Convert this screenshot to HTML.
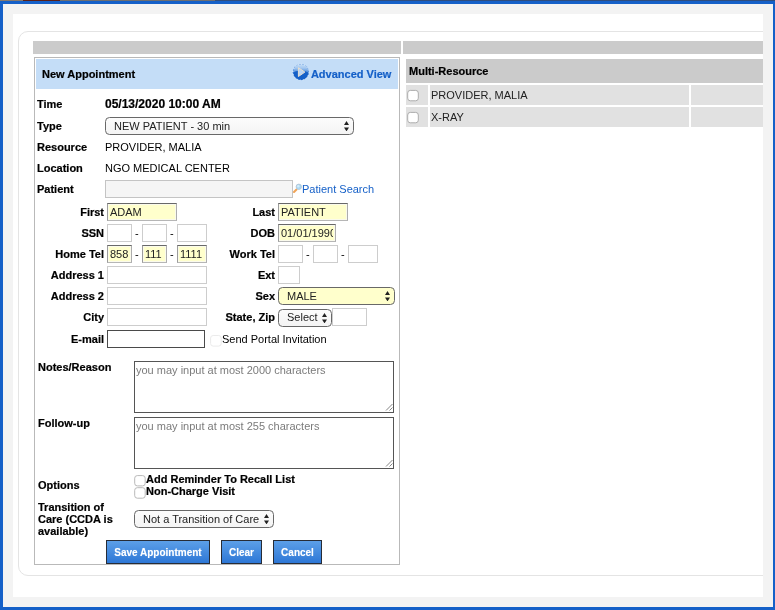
<!DOCTYPE html>
<html><head><meta charset="utf-8"><title>New Appointment</title>
<style>
html,body{margin:0;padding:0}
body{width:775px;height:610px;overflow:hidden;position:relative;background:#f3f3f3;font-family:"Liberation Sans",Arial,sans-serif;font-size:11px;color:#000}
.a{position:absolute;white-space:nowrap;line-height:13px}
.b{font-weight:bold;-webkit-text-stroke:0.2px #000}
.r{text-align:right}
.in{position:absolute;box-sizing:border-box;background:#fff;border:1px solid #cdcdcd;height:18px;font-size:11px;line-height:16px;padding:0 0 0 2px;color:#222;overflow:hidden;white-space:nowrap}
.y{background:#ffffcc;border-color:#686868 #adadad #b6b6b6 #9c9c9c;box-shadow:inset 0 0 0 1px #fafaec}
.sel{position:absolute;box-sizing:border-box;border:1px solid #686868;border-radius:4.5px;height:18px;line-height:16px;font-size:11px;padding-left:8px;color:#222;background:linear-gradient(#fcfcfc,#f4f4f4)}
.sel svg{position:absolute;right:4px;top:2.7px}
.cb{position:absolute;box-sizing:border-box;width:11px;height:11px;border:1px solid #b4b4b4;border-radius:3px;background:#fff}
.ta{position:absolute;box-sizing:border-box;border:1px solid #555;background:#fff;color:#7b7b7b;font-size:11px;line-height:13px;padding:2px 0 0 1px}
.btn{position:absolute;box-sizing:border-box;height:24px;border:1px solid #272c36;background:linear-gradient(#5c9fe8,#2d77d6);color:#fff;font-weight:bold;font-size:10px;line-height:23px;text-align:center;text-shadow:0 0 1px rgba(255,255,255,.45)}
.dash{position:absolute;font-size:11px;line-height:13px}
.g{position:absolute;background:#e1e1e1}
#w{position:absolute;left:0;top:0;width:775px;height:610px;will-change:transform}
</style></head><body><div id="w">
<!-- window chrome -->
<div style="position:absolute;left:0;top:0;width:775px;height:1px;background:#2f4d7c"></div>
<div style="position:absolute;left:0;top:0;width:215px;height:1px;background:#6e6e70"></div>
<div style="position:absolute;left:0;top:0;width:23px;height:1px;background:#857a70"></div>
<div style="position:absolute;left:23px;top:0;width:37px;height:1px;background:#5a2018"></div>
<div style="position:absolute;left:0;top:1px;width:775px;height:3px;background:#1560c8"></div>
<div style="position:absolute;left:0;top:1px;width:3px;height:609px;background:#1560c8"></div>
<div style="position:absolute;left:773px;top:1px;width:2px;height:609px;background:#1560c8"></div>
<div style="position:absolute;left:0;top:607px;width:775px;height:3px;background:#1560c8"></div>
<!-- white page -->
<div style="position:absolute;left:13px;top:14px;width:750px;height:583px;background:#fff;overflow:hidden">
  <div style="position:absolute;left:5px;top:17px;width:800px;height:545px;border:1px solid #e4e4e4;border-radius:10px;box-sizing:border-box"></div>
</div>
<!-- gray bars -->
<div style="position:absolute;left:33px;top:41px;width:368px;height:13px;background:#cbcbcb"></div>
<div style="position:absolute;left:403px;top:41px;width:360px;height:13px;background:#cbcbcb"></div>
<!-- form box -->
<div style="position:absolute;left:34px;top:57px;width:366px;height:508px;border:1px solid #b9b9b9;box-sizing:border-box"></div>
<div style="position:absolute;left:36px;top:59px;width:362px;height:30px;background:#c4ddf7"></div>
<div class="a b" style="left:42px;top:68px">New Appointment</div>
<div class="a b" style="left:310.9px;top:68px;color:#1560c8;-webkit-text-stroke-color:#1560c8">Advanced View</div>

<div class="a b" style="left:37px;top:98px">Time</div>
<div class="a b" style="left:105px;top:97px;font-size:12px;line-height:14px">05/13/2020 10:00 AM</div>
<div class="a b" style="left:37px;top:120px">Type</div>
<div class="sel" style="left:105px;top:117px;width:249px">NEW PATIENT - 30 min<svg width="5" height="10.4" viewBox="0 0 5 10.4"><path d="M2.5 0 L5 4 L0 4 Z M0 6.4 L5 6.4 L2.5 10.4 Z" fill="#222"/></svg></div>
<div class="a b" style="left:37px;top:141px">Resource</div>
<div class="a" style="left:105px;top:141px">PROVIDER, MALIA</div>
<div class="a b" style="left:37px;top:162px">Location</div>
<div class="a" style="left:105px;top:162px">NGO MEDICAL CENTER</div>
<div class="a b" style="left:37px;top:183px">Patient</div>
<div class="in" style="left:105px;top:180px;width:188px;background:#f5f5f5;border-color:#c4c4c4"></div>
<div class="a" style="left:302px;top:183px;color:#1560c8">Patient Search</div>

<div class="a b r" style="left:37px;width:67px;top:206px">First</div>
<div class="in y" style="left:107px;top:203px;width:70px">ADAM</div>
<div class="a b r" style="left:208px;width:67px;top:206px">Last</div>
<div class="in y" style="left:278px;top:203px;width:70px">PATIENT</div>

<div class="a b r" style="left:37px;width:67px;top:227px">SSN</div>
<div class="in" style="left:107px;top:224px;width:25px"></div><div class="dash" style="left:135px;top:227px">-</div>
<div class="in" style="left:142px;top:224px;width:25px"></div><div class="dash" style="left:170px;top:227px">-</div>
<div class="in" style="left:177px;top:224px;width:30px"></div>
<div class="a b r" style="left:208px;width:67px;top:227px">DOB</div>
<div class="in y" style="left:278px;top:224px;width:58px"><div style="width:52.3px;overflow:hidden">01/01/1990</div></div>

<div class="a b r" style="left:37px;width:67px;top:248px">Home Tel</div>
<div class="in y" style="left:107px;top:245px;width:25px">858</div><div class="dash" style="left:135px;top:248px">-</div>
<div class="in y" style="left:142px;top:245px;width:25px">111</div><div class="dash" style="left:170px;top:248px">-</div>
<div class="in y" style="left:177px;top:245px;width:30px">1111</div>
<div class="a b r" style="left:208px;width:67px;top:248px">Work Tel</div>
<div class="in" style="left:278px;top:245px;width:25px"></div><div class="dash" style="left:306px;top:248px">-</div>
<div class="in" style="left:313px;top:245px;width:25px"></div><div class="dash" style="left:341px;top:248px">-</div>
<div class="in" style="left:348px;top:245px;width:30px"></div>

<div class="a b r" style="left:37px;width:67px;top:269px">Address 1</div>
<div class="in" style="left:107px;top:266px;width:100px"></div>
<div class="a b r" style="left:208px;width:67px;top:269px">Ext</div>
<div class="in" style="left:278px;top:266px;width:22px"></div>

<div class="a b r" style="left:37px;width:67px;top:290px">Address 2</div>
<div class="in" style="left:107px;top:287px;width:100px"></div>
<div class="a b r" style="left:208px;width:67px;top:290px">Sex</div>
<div class="sel" style="left:278px;top:287px;width:117px;background:#ffffcc">MALE<svg width="5" height="10.4" viewBox="0 0 5 10.4"><path d="M2.5 0 L5 4 L0 4 Z M0 6.4 L5 6.4 L2.5 10.4 Z" fill="#222"/></svg></div>

<div class="a b r" style="left:37px;width:67px;top:311px">City</div>
<div class="in" style="left:107px;top:308px;width:100px"></div>
<div class="a b r" style="left:208px;width:67px;top:311px">State, Zip</div>
<div class="sel" style="left:278px;top:309px;width:54px;line-height:15px">Select<svg width="5" height="10.4" viewBox="0 0 5 10.4"><path d="M2.5 0 L5 4 L0 4 Z M0 6.4 L5 6.4 L2.5 10.4 Z" fill="#222"/></svg></div>
<div class="in" style="left:332px;top:308px;width:35px"></div>

<div class="a b r" style="left:37px;width:67px;top:333px">E-mail</div>
<div class="in" style="left:107px;top:330px;width:98px;height:18px;border-color:#4a4a4a"></div>
<div class="a" style="left:222px;top:333px">Send Portal Invitation</div>

<div class="a b" style="left:38px;top:361px">Notes/Reason</div>
<div class="ta" style="left:134px;top:361px;width:260px;height:52px">you may input at most 2000 characters</div>
<div class="a b" style="left:38px;top:417px">Follow-up</div>
<div class="ta" style="left:134px;top:417px;width:260px;height:52px">you may input at most 255 characters</div>

<div class="a b" style="left:38px;top:479px">Options</div>
<div class="a b" style="left:146px;top:473px">Add Reminder To Recall List</div>
<div class="a b" style="left:146px;top:485px">Non-Charge Visit</div>

<div class="a b" style="left:38px;top:501px;line-height:12px;white-space:normal;width:90px">Transition of<br>Care (CCDA is<br>available)</div>
<div class="sel" style="left:134px;top:510px;width:140px">Not a Transition of Care<svg width="5" height="10.4" viewBox="0 0 5 10.4"><path d="M2.5 0 L5 4 L0 4 Z M0 6.4 L5 6.4 L2.5 10.4 Z" fill="#222"/></svg></div>

<div class="btn" style="left:106px;top:540px;width:104px">Save Appointment</div>
<div class="btn" style="left:221px;top:540px;width:41px">Clear</div>
<div class="btn" style="left:273px;top:540px;width:49px">Cancel</div>

<!-- right table -->
<div style="position:absolute;left:406px;top:59px;width:357px;height:24px;background:#cbcbcb"></div>
<div class="a b" style="left:409px;top:65px">Multi-Resource</div>
<div class="g" style="left:406px;top:85px;width:22px;height:20px"></div>
<div class="g" style="left:430px;top:85px;width:259px;height:20px"></div>
<div class="g" style="left:691px;top:85px;width:72px;height:20px"></div>
<div class="a" style="left:431px;top:89px;color:#222">PROVIDER, MALIA</div>
<div class="g" style="left:406px;top:107px;width:22px;height:20px"></div>
<div class="g" style="left:430px;top:107px;width:259px;height:20px"></div>
<div class="g" style="left:691px;top:107px;width:72px;height:20px"></div>
<div class="a" style="left:431px;top:111px;color:#222">X-RAY</div>
<svg style="position:absolute;left:0;top:0" width="775" height="610" viewBox="0 0 775 610">
<defs><linearGradient id="ig" x1="0" y1="64" x2="0" y2="73" gradientUnits="userSpaceOnUse"><stop offset="0" stop-color="#c6def7"/><stop offset=".45" stop-color="#a4c8f0"/><stop offset="1" stop-color="#3f82d8"/></linearGradient><clipPath id="ic"><circle cx="300.9" cy="72.2" r="8"/></clipPath></defs>
<circle cx="300.9" cy="72.2" r="8" fill="#1560c8"/>
<path d="M292 73.2 Q296 70.2 301 70.4 Q306 70.6 310 73.4 L310 63 L292 63 Z" fill="url(#ig)" clip-path="url(#ic)"/>
<circle cx="300.9" cy="72.2" r="7.9" fill="none" stroke="#fff" stroke-width="1" stroke-dasharray="1 2.1" opacity=".75"/>
<path d="M298.4 67.7 L304.9 72.1 L298.4 76.5 Z" fill="#b9d5f5" stroke="#e8dece" stroke-width="1" stroke-linejoin="round"/>
<path d="M294 192 L296.5 189.5" stroke="#f0a458" stroke-width="2.1" stroke-linecap="round"/>
<circle cx="298.8" cy="186.8" r="2.7" fill="#a9d9f4" stroke="#b4c2d0" stroke-width=".8"/>
<circle cx="298.3" cy="186.2" r="1.2" fill="#d4edfb"/>
<g fill="#fff" stroke="#b9b9b9" stroke-width="1">
<rect x="134.7" y="475.6" width="10.5" height="10.3" rx="2.6"/>
<rect x="134.7" y="487.7" width="10.5" height="10.5" rx="2.6"/>
<rect x="407.7" y="90.4" width="10.6" height="10.4" rx="2.6" stroke="#adadad"/>
<rect x="407.7" y="112.4" width="10.6" height="10.4" rx="2.6" stroke="#adadad"/>
<rect x="210.6" y="335.5" width="10.6" height="10.6" rx="2.6" stroke="#ebebeb"/>
</g>
<g stroke="#666" stroke-width="0.8">
<path d="M386 410.5 L392.5 404 M389.5 410.5 L392.5 407.5"/>
<path d="M386 466.5 L392.5 460 M389.5 466.5 L392.5 463.5"/>
</g>
</svg>
</div></body></html>
